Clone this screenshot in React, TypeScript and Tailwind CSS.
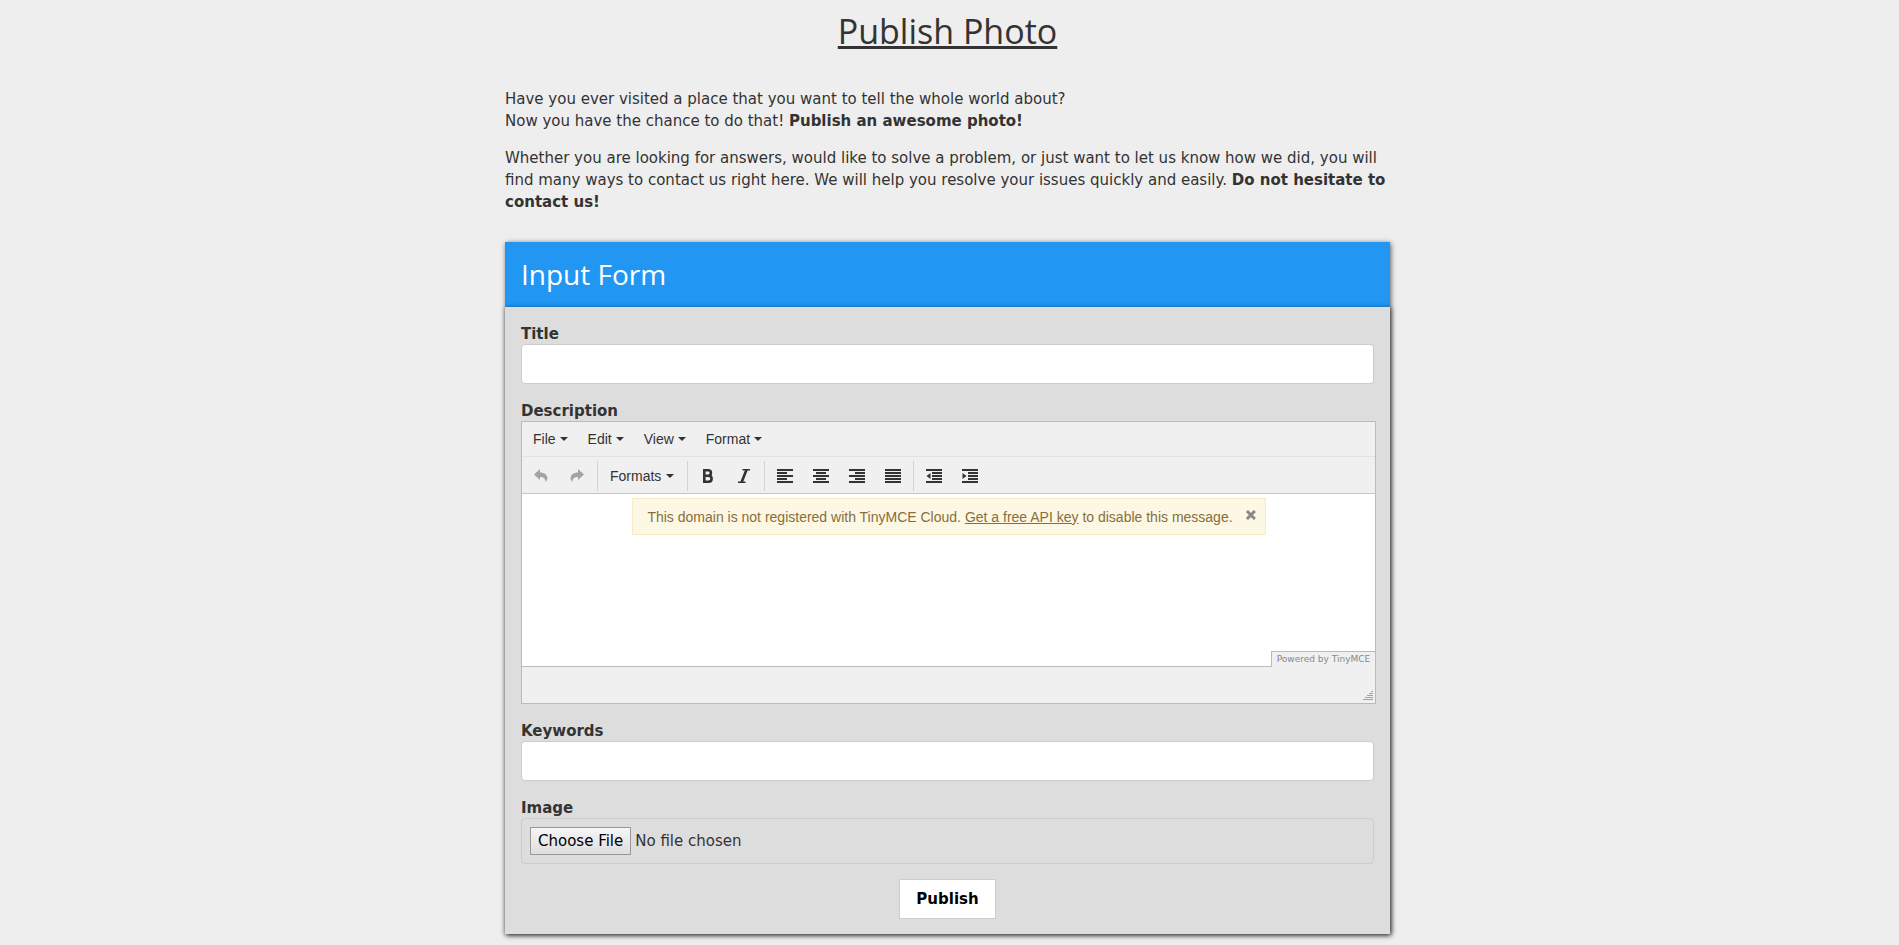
import type { ReactNode } from "react";

const BARS = {
  left: [[0, 16], [0, 10], [0, 16], [0, 10], [0, 16]],
  center: [[0, 16], [3, 10], [0, 16], [3, 10], [0, 16]],
  right: [[0, 16], [6, 10], [0, 16], [6, 10], [0, 16]],
  justify: [[0, 16], [0, 16], [0, 16], [0, 16], [0, 16]],
  indent: [[0, 16], [6, 10], [6, 10], [6, 10], [0, 16]],
};

function BarsIcon({ kind, children }: { kind: keyof typeof BARS; children?: ReactNode }) {
  return (
    <svg width="16" height="14" viewBox="0 0 16 14" fill="currentColor" aria-hidden="true">
      {BARS[kind].map(([x, w], i) => (
        <rect key={i} x={x} y={i * 3} width={w} height="2" />
      ))}
      {children}
    </svg>
  );
}

const UNDO = "M1 6.5 7 1v3.4c4.6 0 7.4 2.4 7.4 5.8 0 1.5-.7 2.9-2 3.8.3-3.4-1.6-5-5.4-5V12z";

function ArrowIcon({ flip }: { flip?: boolean }) {
  return (
    <svg width="16" height="16" viewBox="0 0 16 16" fill="currentColor" aria-hidden="true">
      <path d={UNDO} transform={flip ? "translate(16 0) scale(-1 1)" : undefined} />
    </svg>
  );
}

function Caret() {
  return (
    <svg width="8" height="4" viewBox="0 0 8 4" fill="currentColor" aria-hidden="true">
      <path d="M0 0h8L4 4z" />
    </svg>
  );
}

function Tool({ label, disabled, children }: { label: string; disabled?: boolean; children: ReactNode }) {
  return (
    <button
      type="button"
      aria-label={label}
      disabled={disabled}
      className="flex h-[30px] w-9 items-center justify-center disabled:text-[#a3a3a3]"
    >
      {children}
    </button>
  );
}

function Group({ children }: { children: ReactNode }) {
  return <div className="flex border-l border-[#d4d4d4] px-0.5 first:border-l-0 first:pl-px">{children}</div>;
}

function Editor() {
  return (
    <div className="-mr-0.5 border border-[#bbb] bg-[#f0f0f0] font-['Liberation_Sans',Arial,sans-serif] text-sm text-[#333]">
      <div className="flex h-[35px] items-center border-b border-[#e2e2e2] pl-px" role="menubar">
        {["File", "Edit", "View", "Format"].map((name) => (
          <button key={name} type="button" role="menuitem" className="flex items-center gap-1 px-2.5">
            {name}
            <Caret />
          </button>
        ))}
      </div>
      <div className="flex border-b border-[#c5c5c5] pt-1 pb-0.5" role="toolbar" aria-label="Formatting">
        <Group>
          <Tool label="Undo" disabled><ArrowIcon /></Tool>
          <Tool label="Redo" disabled><ArrowIcon flip /></Tool>
        </Group>
        <Group>
          <button type="button" className="flex h-[30px] items-center gap-[5px] pr-[11px] pl-2.5">
            Formats
            <Caret />
          </button>
        </Group>
        <Group>
          <Tool label="Bold">
            <svg width="12" height="14" viewBox="0 0 12 14" fill="none" stroke="currentColor" strokeWidth="2.6" aria-hidden="true">
              <path d="M2.3 1.3h3.9c1.7 0 2.7 1 2.7 2.7S7.900 6.700 6.200 6.700H2.300zM2.300 6.700h4.300c1.900 0 3 1.100 3 3s-1.100 3-3 3H2.300z" />
            </svg>
          </Tool>
          <Tool label="Italic">
            <svg width="12" height="14" viewBox="0 0 12 14" fill="none" stroke="currentColor" aria-hidden="true">
              <path d="M4.500.7H12M0 13.300h7.500" strokeWidth="1.4" />
              <path d="M8.500.7 3.600 13.300" strokeWidth="2.6" />
            </svg>
          </Tool>
        </Group>
        <Group>
          <Tool label="Align left"><BarsIcon kind="left" /></Tool>
          <Tool label="Align center"><BarsIcon kind="center" /></Tool>
          <Tool label="Align right"><BarsIcon kind="right" /></Tool>
          <Tool label="Justify"><BarsIcon kind="justify" /></Tool>
        </Group>
        <Group>
          <Tool label="Decrease indent">
            <BarsIcon kind="indent"><path d="M4.500 4v6L.5 7z" /></BarsIcon>
          </Tool>
          <Tool label="Increase indent">
            <BarsIcon kind="indent"><path d="M.5 4v6l4-3z" /></BarsIcon>
          </Tool>
        </Group>
      </div>
      <div className="relative border-b border-[#bbb] bg-white">
        <textarea id="description" className="block h-[172px] w-full resize-none bg-white p-2 outline-none" />
        <div
          role="alert"
          className="absolute top-1 left-1/2 flex h-[37px] -translate-x-1/2 items-center gap-3 border border-[#fbe8c4] bg-[#fcf8e3] pr-2 pl-[15px] whitespace-nowrap text-[#8a6d3b]"
        >
          <p>
            This domain is not registered with TinyMCE Cloud.{" "}
            <a href="#api-key" className="underline">Get a free API key</a> to disable this message.
          </p>
          <button type="button" aria-label="Close" className="mb-1 text-[#888]">
            <svg width="12" height="10" viewBox="0 0 12 10" fill="none" stroke="currentColor" strokeWidth="3" aria-hidden="true">
              <path d="M2 1l8 8M10 1 2 9" />
            </svg>
          </button>
        </div>
        <a
          href="#tinymce"
          className="absolute right-0 -bottom-px flex h-4 w-[104px] items-center justify-center border-t border-l border-[#bbb] bg-[#f0f0f0] font-['DejaVu_Sans',sans-serif] text-[9px] whitespace-nowrap text-[#888]"
        >
          Powered by TinyMCE
        </a>
      </div>
      <div className="flex h-9 items-end justify-end pr-0.5 pb-0.5">
        <svg width="10" height="10" viewBox="0 0 10 10" stroke="#a8a28c" aria-hidden="true">
          <path d="M8 .5h2M6 2.500h4M4 4.500h6M2 6.500h8M0 8.500h10" />
        </svg>
      </div>
    </div>
  );
}

function Field({ id, label, children }: { id: string; label: string; children: ReactNode }) {
  return (
    <div>
      <label htmlFor={id} className="block h-[22px] leading-6 font-bold">{label}</label>
      {children}
    </div>
  );
}

const INPUT = "block h-10 w-full rounded border border-[#ccc] bg-white px-2 outline-none";

export default function App() {
  return (
    <main className="min-h-screen bg-[#eee] pt-1 pr-1 pb-[11px] font-['DejaVu_Sans',Verdana,sans-serif] text-[15px] leading-[22px] text-[#333]">
      <div className="mx-auto max-w-[885px]">
        <h1 className="mb-[30px] text-center font-['Open_Sans',sans-serif] text-[34px] leading-[54px] underline">Publish Photo</h1>
        <p className="mb-[15px]">
          Have you ever visited a place that you want to tell the whole world about?
          <br />
          Now you have the chance to do that! <strong>Publish an awesome photo!</strong>
        </p>
        <p className="mb-[29px]">
          Whether you are looking for answers, would like to solve a problem, or just want to let us know how we did, you
          will find many ways to contact us right here. We will help you resolve your issues quickly and easily.{" "}
          <strong>Do not hesitate to contact us!</strong>
        </p>
        <section className="shadow-[1px_1px_5px_rgba(0,0,0,0.6)]">
          <h2 className="bg-[#2196f3] px-4 py-2.5 font-['Open_Sans',sans-serif] text-[28px] leading-[45px] text-white">
            Input Form
          </h2>
          <form
            onSubmit={(e) => e.preventDefault()}
            className="flex flex-col gap-[15px] bg-[#ddd] px-4 py-[15px] shadow-[1px_1px_5px_rgba(0,0,0,0.6)]"
          >
            <Field id="title" label="Title">
              <input id="title" type="text" className={INPUT} />
            </Field>
            <Field id="description" label="Description">
              <Editor />
            </Field>
            <Field id="keywords" label="Keywords">
              <input id="keywords" type="text" className={INPUT} />
            </Field>
            <Field id="image" label="Image">
              <input
                id="image"
                type="file"
                className="block w-full rounded border border-[#ccc] p-2 file:mr-1 file:h-7 file:border file:border-solid file:border-[#999] file:bg-linear-to-b file:from-[#f6f6f6] file:to-[#dedede] file:px-[7px] file:text-black"
              />
            </Field>
            <button type="submit" className="h-10 self-center border border-[#ccc] bg-white px-4 font-bold text-black">
              Publish
            </button>
          </form>
        </section>
      </div>
    </main>
  );
}
